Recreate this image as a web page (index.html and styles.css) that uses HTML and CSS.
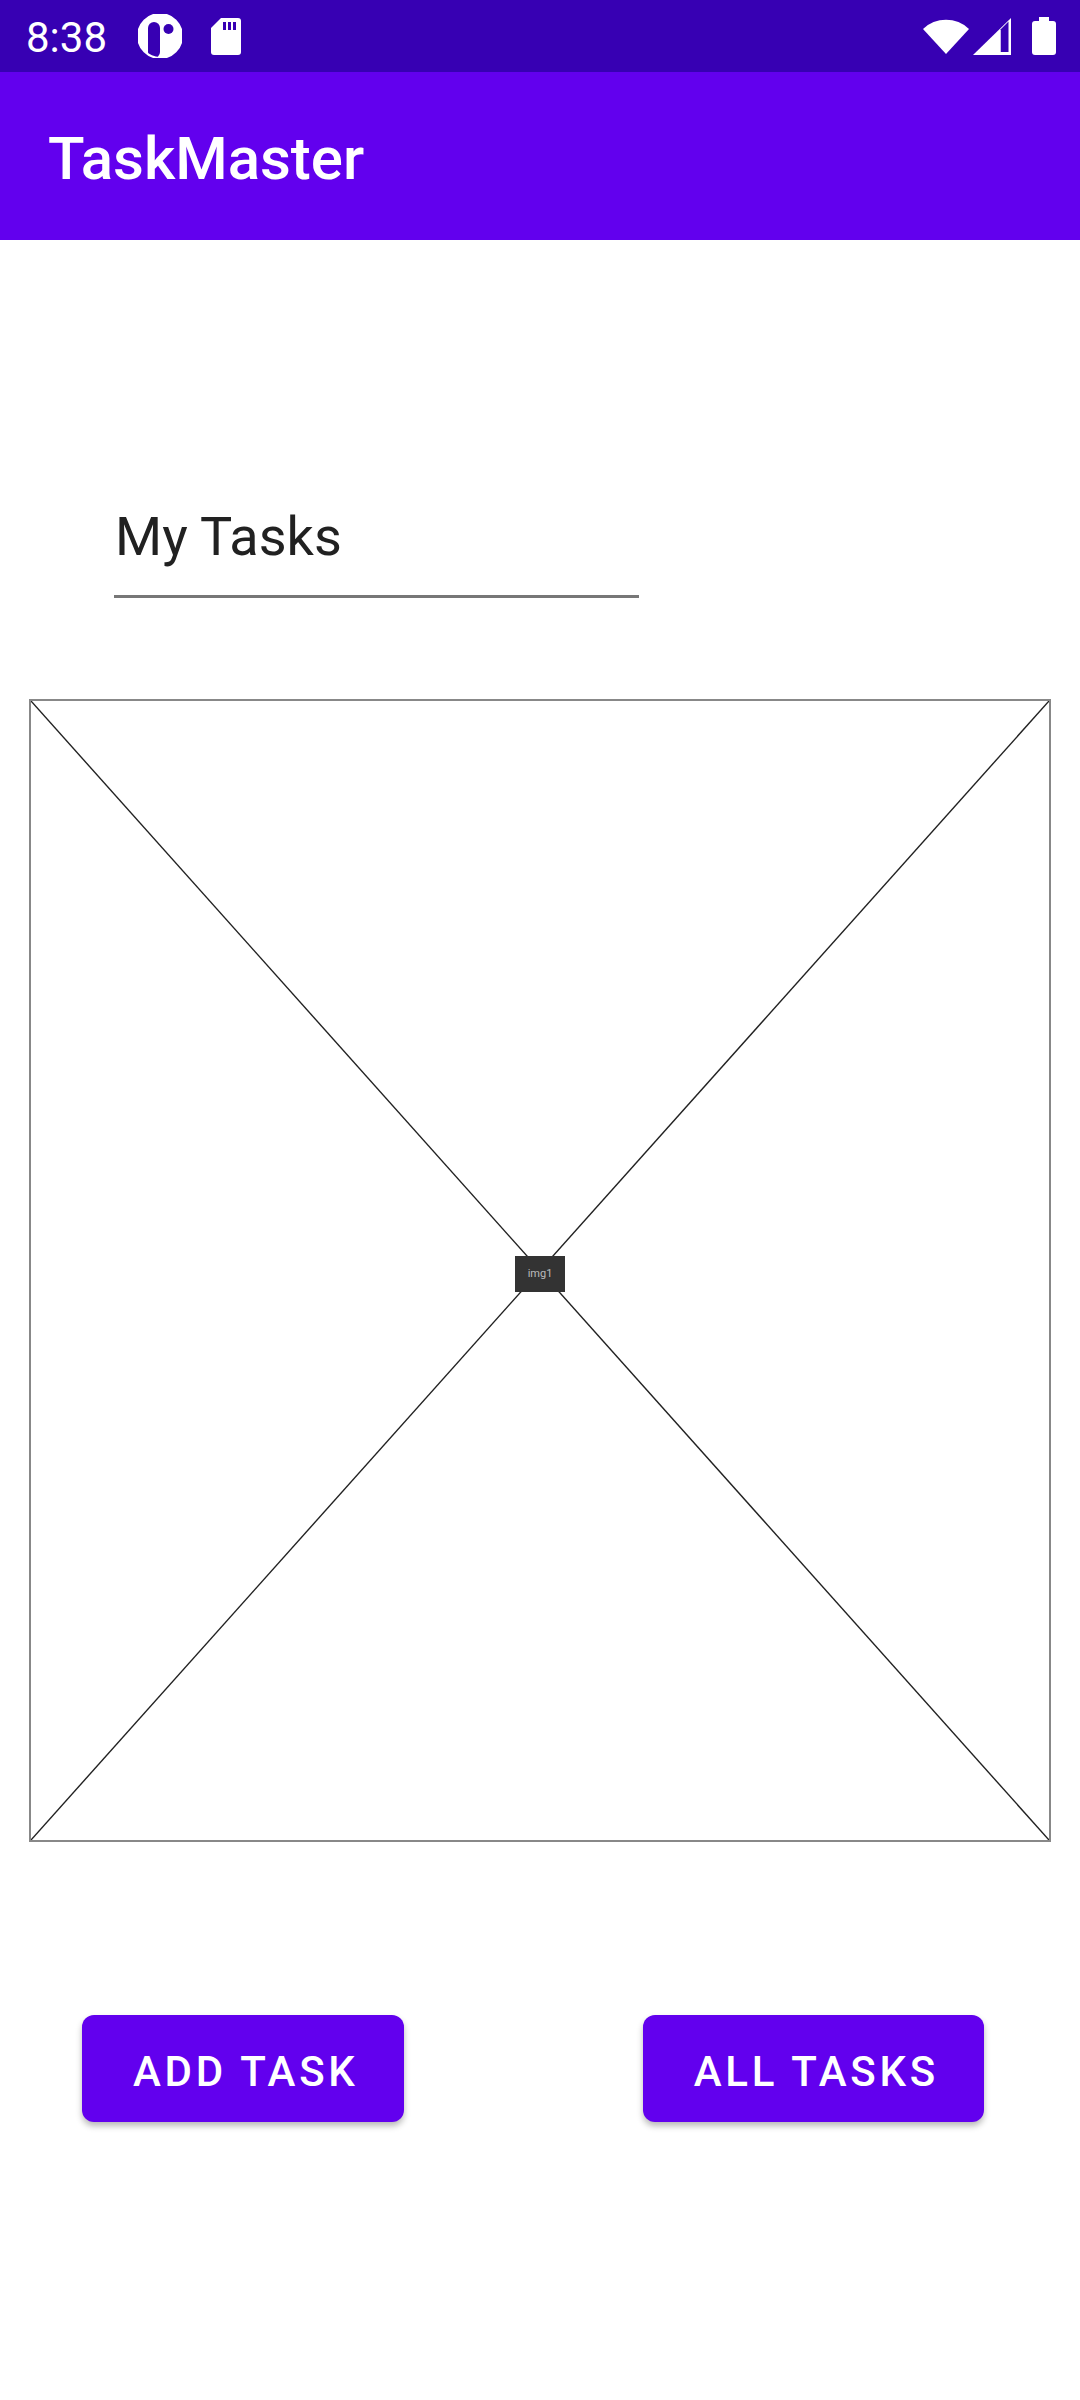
FILE: index.html
```html
<!DOCTYPE html>
<html lang="en">
<head>
    <meta charset="UTF-8">
    <meta name="viewport" content="width=device-width, initial-scale=1.0">
    <title>TaskMaster</title>
    <link rel="stylesheet" href="styles.css">
</head>
<body>
    <div class="status-bar">
        <div class="status-left">
            <span class="status-time">8:38</span>
            <!-- app notification icon -->
            <svg class="icon-app" width="44" height="44" viewBox="0 0 44 44">
                <circle cx="22" cy="22" r="22" fill="#fff"/>
                <rect x="10" y="8" width="12" height="36" rx="6" fill="#3700B3"/>
                <circle cx="30.5" cy="15" r="5" fill="#3700B3"/>
                <circle cx="22" cy="22" r="22" fill="none" stroke="#fff" stroke-width="2"/>
            </svg>
            <!-- sd card -->
            <svg class="icon-sd" width="30" height="37" viewBox="0 0 30 37">
                <path d="M10 0 H27 Q30 0 30 3 V34 Q30 37 27 37 H3 Q0 37 0 34 V10 Z" fill="#fff"/>
                <rect x="12" y="4" width="3" height="8" fill="#3700B3"/>
                <rect x="17" y="4" width="3" height="8" fill="#3700B3"/>
                <rect x="22" y="4" width="3" height="8" fill="#3700B3"/>
            </svg>
        </div>
        <div class="status-right">
            <svg width="46" height="37" viewBox="0 0 46 37">
                <path d="M23 36 L0 11 A33 33 0 0 1 46 11 Z" fill="#fff"/>
            </svg>
            <svg width="38" height="37" viewBox="0 0 38 37">
                <path d="M38 0 V37 H0 Z" fill="#fff"/>
                <path d="M27 12 V34 H35.5 V3.5 Z" fill="#3700B3"/>
                <path d="M27 34 V12" stroke="#fff" stroke-width="1.5"/>
            </svg>
            <svg width="24" height="38" viewBox="0 0 24 38">
                <rect x="7" y="0" width="10" height="5" fill="#fff"/>
                <rect x="0" y="4" width="24" height="34" rx="3" fill="#fff"/>
            </svg>
        </div>
    </div>

    <div class="app-bar">
        <h1 class="app-title">TaskMaster</h1>
    </div>

    <main class="content">
        <div class="task-input">
            <span class="task-input-text">My Tasks</span>
        </div>

        <div class="placeholder-img">
            <svg class="placeholder-lines" viewBox="0 0 100 100" preserveAspectRatio="none">
                <line x1="0" y1="0" x2="100" y2="100" vector-effect="non-scaling-stroke"/>
                <line x1="100" y1="0" x2="0" y2="100" vector-effect="non-scaling-stroke"/>
            </svg>
            <span class="img-label">img1</span>
        </div>

        <div class="button-row">
            <button class="btn btn-add">Add Task</button>
            <button class="btn btn-all">All Tasks</button>
        </div>
    </main>
</body>
</html>
```

FILE: styles.css
```css
body {
    margin: 0;
    width: 1080px;
    height: 2400px;
    background: #fff;
    font-family: Roboto, "Noto Sans", sans-serif;
    overflow: hidden;
}

.status-bar {
    height: 72px;
    background-color: #3700B3;
    color: white;
    display: flex;
    align-items: center;
    justify-content: space-between;
    padding: 0 24px 0 26px;
}
.status-left {
    display: flex;
    align-items: center;
}
.status-time {
    font-size: 42px;
    padding-top: 3px;
    width: 112px;
}
.icon-app {
    margin-right: 29px;
}
.status-right {
    display: flex;
    align-items: center;
    gap: 4px;
}
.status-right svg:last-child {
    margin-left: 17px;
}

.app-bar {
    height: 168px;
    background-color: #6200EE;
    display: flex;
    align-items: center;
    padding-left: 48px;
}
.app-title {
    margin: 0;
    padding-top: 4px;
    color: white;
    font-size: 60px;
    font-weight: 500;
}

.content {
    padding-top: 265px;
}

.task-input {
    margin-left: 114px;
    width: 525px;
    padding: 0 0 26px 1px;
    box-sizing: border-box;
    border-bottom: 3px solid #777;
}
.task-input-text {
    font-size: 54px;
    line-height: 64px;
    color: #212121;
}

.placeholder-img {
    position: relative;
    margin: 101px 29px 0 29px;
    height: 1143px;
    box-sizing: border-box;
    border: 2px solid #888;
    display: flex;
    align-items: center;
    justify-content: center;
}
.placeholder-lines {
    position: absolute;
    inset: 0;
    width: 100%;
    height: 100%;
}
.placeholder-lines line {
    stroke: #222;
    stroke-width: 1.4;
}
.img-label {
    position: relative;
    width: 50px;
    height: 36px;
    margin-top: 6px;
    background: #333;
    color: #bbb;
    font-size: 11px;
    display: flex;
    align-items: center;
    justify-content: center;
}

.button-row {
    display: flex;
    margin-top: 173px;
    padding-left: 82px;
    gap: 239px;
}
.btn {
    height: 107px;
    padding: 5px 45px 0 51px;
    border: none;
    border-radius: 12px;
    background-color: #6200EE;
    color: white;
    font-family: Roboto, sans-serif;
    font-size: 42px;
    font-weight: 500;
    letter-spacing: 3.75px;
    text-transform: uppercase;
    box-shadow: 0 4px 6px rgba(0, 0, 0, 0.28);
    cursor: pointer;
}
```
